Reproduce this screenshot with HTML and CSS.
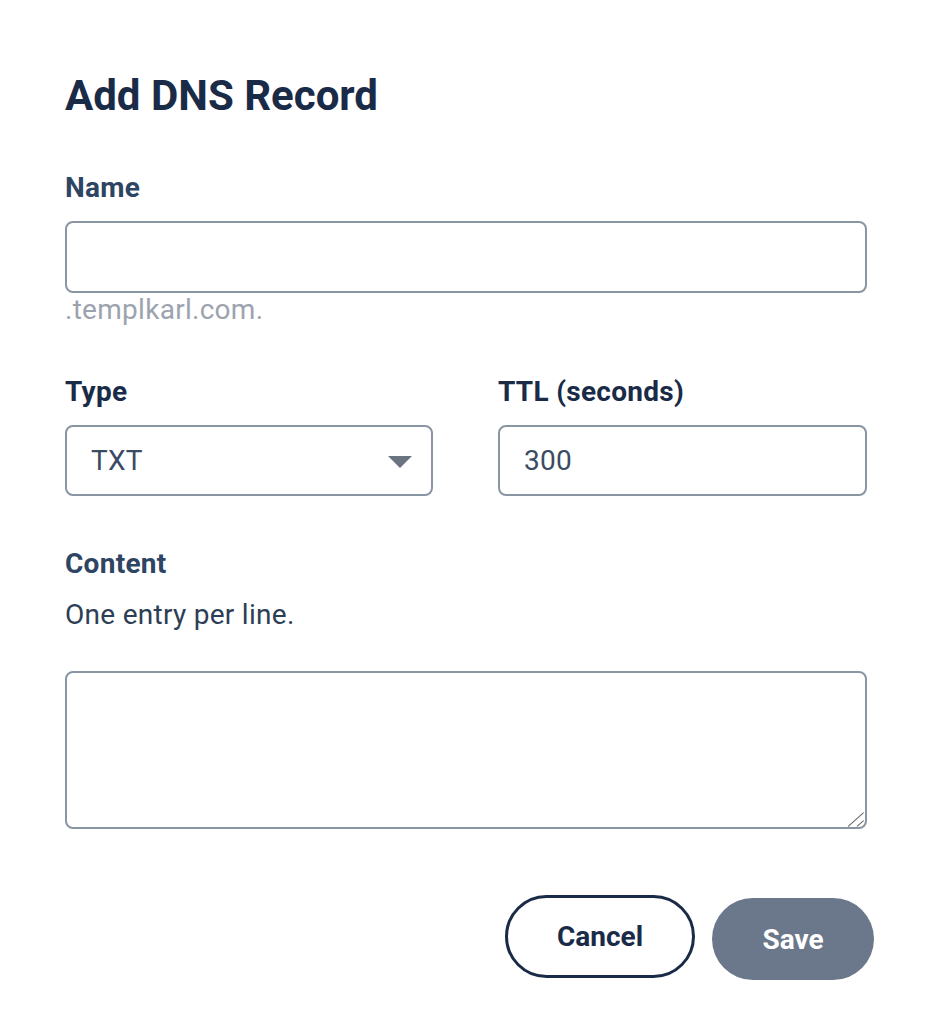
FILE: index.html
```html
<!DOCTYPE html>
<html lang="en">
<head>
<meta charset="utf-8">
<title>Add DNS Record</title>
<link rel="stylesheet" href="styles.css">
</head>
<body>
<div class="dialog">
  <h1 class="title">Add DNS Record</h1>

  <label class="label label-name" for="name">Name</label>
  <input class="field field-name" id="name" type="text">
  <div class="hint">.templkarl.com.</div>

  <div class="row">
    <div class="col">
      <label class="label label-dark" for="type">Type</label>
      <div class="select-wrap">
        <select class="field field-row select" id="type">
          <option>TXT</option>
        </select>
        <svg class="caret" width="24" height="12" viewBox="0 0 24 12" aria-hidden="true"><path d="M0 0 H24 L12 12 Z" fill="#6b7280"/></svg>
      </div>
    </div>
    <div class="col">
      <label class="label label-dark" for="ttl">TTL (seconds)</label>
      <input class="field field-row" id="ttl" type="text" value="300">
    </div>
  </div>

  <label class="label label-content" for="content">Content</label>
  <p class="help">One entry per line.</p>
  <div class="area-wrap">
    <textarea class="field area" id="content"></textarea>
    <svg class="grip" width="16" height="16" viewBox="0 0 16 16" aria-hidden="true">
      <path d="M0.5 15.2 L15.3 1.8 M9.3 15.2 L15.3 9.8" stroke="#6b6b6b" stroke-width="1.1" stroke-linecap="round" fill="none"/>
    </svg>
  </div>

  <div class="actions">
    <button class="btn btn-cancel" type="button">Cancel</button>
    <button class="btn btn-save" type="button">Save</button>
  </div>
</div>
</body>
</html>
```

FILE: styles.css
```css
html, body {
  margin: 0;
  padding: 0;
  background: #ffffff;
}

body {
  font-family: Roboto, "Liberation Sans", Arial, sans-serif;
  font-size: 28px;
  line-height: 34px;
  color: #2d4563;
}

.dialog {
  width: 802px;
  padding: 71px 71px 40px 65px;
  display: flex;
  flex-direction: column;
}

.title {
  margin: 0;
  font-size: 42px;
  line-height: 50px;
  font-weight: 700;
  color: #1a2b48;
}

.label {
  display: block;
  font-weight: 700;
  font-size: 28px;
  line-height: 34px;
  letter-spacing: 0.28px;
  color: #2d4563;
  margin-bottom: 16px;
}

.label-name {
  margin-top: 50px;
}

.label-dark {
  color: #1a2b48;
}

.field {
  box-sizing: border-box;
  width: 100%;
  border: 2px solid #8a95a4;
  border-radius: 8px;
  background: #ffffff;
  font-family: Roboto, "Liberation Sans", Arial, sans-serif;
  font-size: 28px;
  letter-spacing: 0.28px;
  color: #3b4b63;
  padding: 0 24px;
  margin: 0;
  outline: none;
}

.field-name {
  height: 72px;
}

.hint {
  color: #9ca3af;
  font-size: 28px;
  line-height: 34px;
  letter-spacing: 0.28px;
}

.row {
  display: grid;
  grid-template-columns: 368px 369px;
  column-gap: 65px;
  margin-top: 48px;
}

.col {
  display: flex;
  flex-direction: column;
}

.field-row {
  height: 71px;
}

.select-wrap {
  position: relative;
}

.select {
  -webkit-appearance: none;
  appearance: none;
  display: block;
}

.caret {
  position: absolute;
  right: 21px;
  top: 31px;
  pointer-events: none;
}

.label-content {
  margin-top: 51px;
  margin-bottom: 17px;
}

.help {
  margin: 0;
  color: #2d3e55;
  font-size: 28px;
  line-height: 34px;
  letter-spacing: 0.28px;
}

.area-wrap {
  position: relative;
  margin-top: 39px;
}

.area {
  height: 158px;
  resize: none;
  padding: 16px 24px;
  display: block;
}

.grip {
  position: absolute;
  right: 3px;
  bottom: 2px;
  pointer-events: none;
}

.actions {
  display: flex;
  justify-content: flex-end;
  align-items: flex-start;
  gap: 17px;
  margin-top: 66px;
  margin-right: -7px;
}

.btn {
  font-family: Roboto, "Liberation Sans", Arial, sans-serif;
  font-size: 28px;
  font-weight: 700;
  border-radius: 999px;
  cursor: pointer;
  box-sizing: border-box;
  padding: 0;
}

.btn-cancel {
  width: 190px;
  height: 83px;
  border: 3px solid #1a2b48;
  background: #ffffff;
  color: #1a2b48;
}

.btn-save {
  width: 162px;
  height: 82px;
  margin-top: 3px;
  border: none;
  background: #6b778a;
  color: #ffffff;
}
```
